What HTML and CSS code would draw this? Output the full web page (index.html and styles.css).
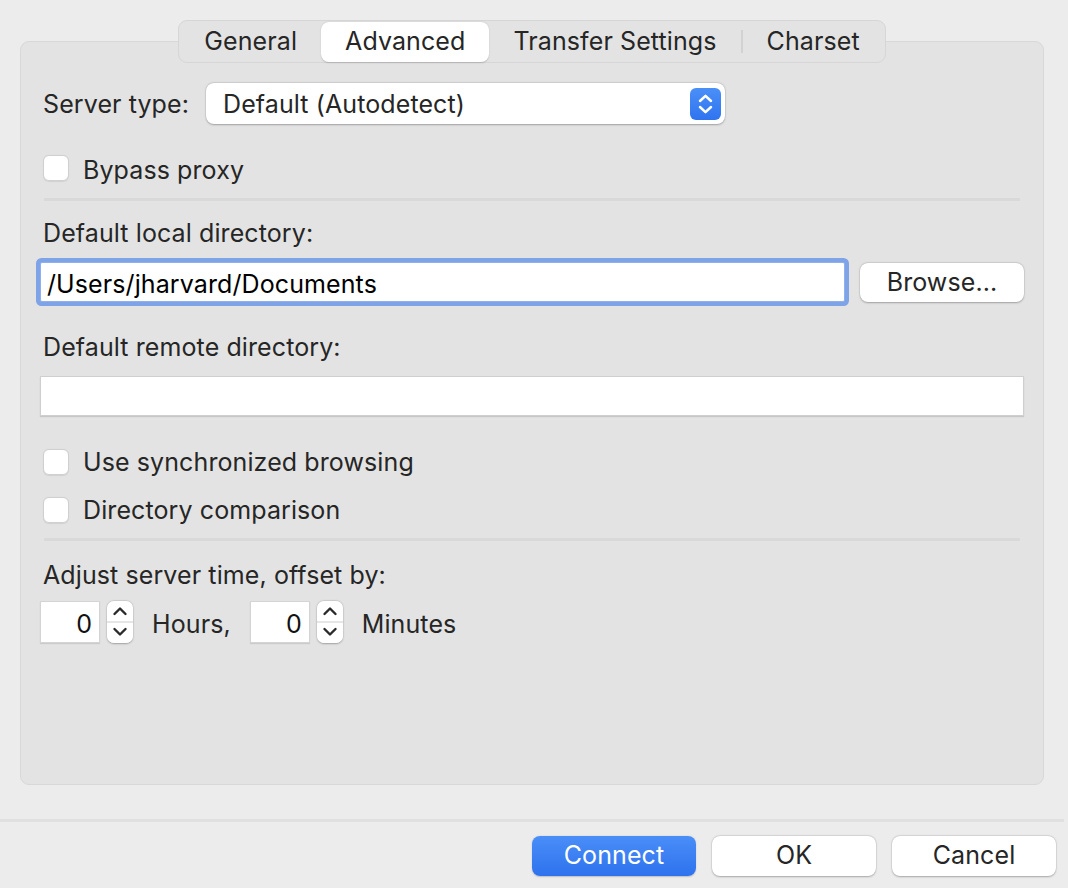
FILE: index.html
```html
<!DOCTYPE html>
<html>
<head>
<meta charset="utf-8">
<link rel="stylesheet" href="styles.css">
</head>
<body>
<div class="window">
  <div class="main">
    <div class="tabs-wrap">
      <div class="tabs">
        <div class="tab">General</div>
        <div class="tab active">Advanced</div>
        <div class="tab">Transfer Settings</div>
        <div class="tab-sep"></div>
        <div class="tab">Charset</div>
      </div>
    </div>
    <div class="panel">
      <div class="row server-row">
        <span class="label">Server type:</span>
        <div class="select">
          <span class="select-text">Default (Autodetect)</span>
          <span class="select-btn">
            <svg width="31" height="32" viewBox="0 0 31 32"><path d="M10 13 L15.5 7.8 L21 13" fill="none" stroke="#fff" stroke-width="2.5" stroke-linecap="round" stroke-linejoin="round"/><path d="M10 19 L15.5 24.2 L21 19" fill="none" stroke="#fff" stroke-width="2.5" stroke-linecap="round" stroke-linejoin="round"/></svg>
          </span>
        </div>
      </div>
      <label class="check check-bypass"><span class="box"></span><span>Bypass proxy</span></label>
      <div class="sep sep-1"></div>
      <div class="label block label-local">Default local directory:</div>
      <div class="row local-row">
        <div class="input focused">/Users/jharvard/Documents</div>
        <div class="button browse">Browse...</div>
      </div>
      <div class="label block label-remote">Default remote directory:</div>
      <div class="input remote"></div>
      <label class="check check-sync"><span class="box"></span><span>Use synchronized browsing</span></label>
      <label class="check check-cmp"><span class="box"></span><span>Directory comparison</span></label>
      <div class="sep sep-2"></div>
      <div class="label block label-adjust">Adjust server time, offset by:</div>
      <div class="row stepper-row">
        <div class="num">0</div>
        <div class="stepper">
          <svg width="26" height="42" viewBox="0 0 26 42"><path d="M7.5 13 L13 7.5 L18.5 13" fill="none" stroke="#2a2a2a" stroke-width="2.4" stroke-linecap="round" stroke-linejoin="round"/><path d="M7.5 28 L13 33.5 L18.5 28" fill="none" stroke="#2a2a2a" stroke-width="2.4" stroke-linecap="round" stroke-linejoin="round"/></svg>
        </div>
        <span class="unit">Hours,</span>
        <div class="num">0</div>
        <div class="stepper">
          <svg width="26" height="42" viewBox="0 0 26 42"><path d="M7.5 13 L13 7.5 L18.5 13" fill="none" stroke="#2a2a2a" stroke-width="2.4" stroke-linecap="round" stroke-linejoin="round"/><path d="M7.5 28 L13 33.5 L18.5 28" fill="none" stroke="#2a2a2a" stroke-width="2.4" stroke-linecap="round" stroke-linejoin="round"/></svg>
        </div>
        <span class="unit">Minutes</span>
      </div>
    </div>
  </div>
  <div class="footer-sep"></div>
  <div class="footer">
    <div class="button primary">Connect</div>
    <div class="button">OK</div>
    <div class="button">Cancel</div>
  </div>
</div>
</body>
</html>
```
FILE: styles.css
```css
html, body {
  margin: 0;
  padding: 0;
}
body {
  width: 1068px;
  height: 888px;
  background: #ececec;
  font-family: "Inter", "Liberation Sans", sans-serif;
  font-size: 25px;
  letter-spacing: 0.1px;
  color: #262626;
  overflow: hidden;
}
.window {
  height: 888px;
  display: flex;
  flex-direction: column;
}
.main {
  padding: 20px 24px 0 20px;
}
.tabs-wrap {
  display: flex;
  justify-content: center;
  position: relative;
  z-index: 1;
  margin-bottom: -22px;
}
.tabs {
  display: flex;
  align-items: center;
  height: 43px;
  box-sizing: border-box;
  padding: 1px 1px;
  background: #e3e3e3;
  border: 1px solid #d6d6d6;
  border-radius: 9px;
}
.tab {
  height: 40px;
  display: flex;
  align-items: center;
  padding: 0 24px;
  border-radius: 8px;
  line-height: 1;
}
.tab.active {
  background: #fff;
  box-shadow: 0 0.5px 1.5px rgba(0,0,0,0.18);
}
.tab-sep {
  width: 2px;
  height: 23px;
  background: #d2d2d2;
}
.panel {
  height: 744px;
  box-sizing: border-box;
  background: #e3e3e3;
  border: 1px solid #d8d8d8;
  border-radius: 9px;
  padding: 41px 19px 0 19px;
}
.row {
  display: flex;
  align-items: center;
}
.label.block {
  line-height: 28px;
  height: 28px;
  padding-left: 3px;
}
.server-row {
  height: 41px;
  padding-left: 3px;
}
.select {
  margin-left: 17px;
  width: 519px;
  height: 41px;
  box-sizing: border-box;
  background: #fff;
  border-radius: 8px;
  box-shadow: 0 0.5px 2px rgba(0,0,0,0.28), 0 0 0 0.5px rgba(0,0,0,0.06);
  display: flex;
  align-items: center;
  justify-content: space-between;
  padding: 0 4px 0 17px;
}
.select-btn {
  width: 31px;
  height: 32px;
  border-radius: 6px;
  background: linear-gradient(#4b8ff8, #2f74ef);
  display: flex;
}
.check {
  display: flex;
  align-items: center;
  gap: 14px;
  height: 26px;
  padding-left: 3px;
}
.box {
  width: 26px;
  height: 26px;
  box-sizing: border-box;
  background: #fff;
  border: 1px solid #d0d0d0;
  border-radius: 6px;
  box-shadow: 0 0.5px 1px rgba(0,0,0,0.08);
}
.check-bypass { margin-top: 31px; }
.check-bypass span:last-child { padding-top: 3px; }
.sep {
  height: 3px;
  background: #d9d9d9;
  margin-left: 4px;
  margin-right: 4px;
}
.sep-1 { margin-top: 17px; }
.label-local { margin-top: 18px; }
.local-row {
  margin-top: 15px;
  height: 40px;
  justify-content: space-between;
}
.input {
  height: 40px;
  box-sizing: border-box;
  background: #fff;
  border: 1px solid #cfcfcf;
  box-shadow: 0 1px 1px rgba(0,0,0,0.12);
}
.input.focused {
  width: 805px;
  border: 1px solid #8fb0ec;
  box-shadow: 0 0 0 4px #7ea3e7;
  border-radius: 2px;
  color: #000;
  display: flex;
  align-items: center;
  padding-left: 6px;
  padding-top: 3px;
}
.button {
  width: 164px;
  height: 40px;
  box-sizing: border-box;
  background: #fff;
  border-radius: 8px;
  box-shadow: 0 0.5px 2px rgba(0,0,0,0.28), 0 0 0 0.5px rgba(0,0,0,0.06);
  display: flex;
  align-items: center;
  justify-content: center;
  color: #262626;
}
.browse {
  height: 39px;
}
.label-remote { margin-top: 31px; }
.input.remote {
  margin-top: 15px;
}
.check-sync { margin-top: 33px; }
.check-cmp { margin-top: 22px; }
.sep-2 { margin-top: 15px; }
.label-adjust { margin-top: 20px; }
.stepper-row {
  margin-top: 12px;
  height: 42px;
}
.num {
  width: 60px;
  height: 42px;
  box-sizing: border-box;
  background: #fff;
  border: 1px solid #d4d4d4;
  box-shadow: 0 1px 1px rgba(0,0,0,0.1);
  display: flex;
  align-items: center;
  justify-content: flex-end;
  padding-right: 7px;
  padding-top: 3px;
  color: #111;
}
.stepper {
  margin-left: 7px;
  width: 26px;
  height: 42px;
  border-radius: 7px;
  background: linear-gradient(#fff 0, #fff 48%, #e6e6e6 48%, #e6e6e6 52%, #fff 52%);
  box-shadow: 0 0.5px 2px rgba(0,0,0,0.28), 0 0 0 0.5px rgba(0,0,0,0.06);
  display: flex;
}
.unit {
  margin-left: 19px;
  margin-right: 19px;
  padding-top: 3px;
}
.footer-sep {
  margin-top: 34px;
  height: 3px;
  background: #e0e0e0;
  margin-right: 4px;
}
.footer {
  margin-top: 14px;
  display: flex;
  justify-content: flex-end;
  gap: 16px;
  padding-right: 12px;
}
.footer .button {
  height: 40px;
  padding-bottom: 2px;
}
.button.primary {
  background: linear-gradient(#4a8ef8, #2e72ee);
  color: #fff;
  box-shadow: 0 0.5px 1.5px rgba(0,0,0,0.2);
}
```
